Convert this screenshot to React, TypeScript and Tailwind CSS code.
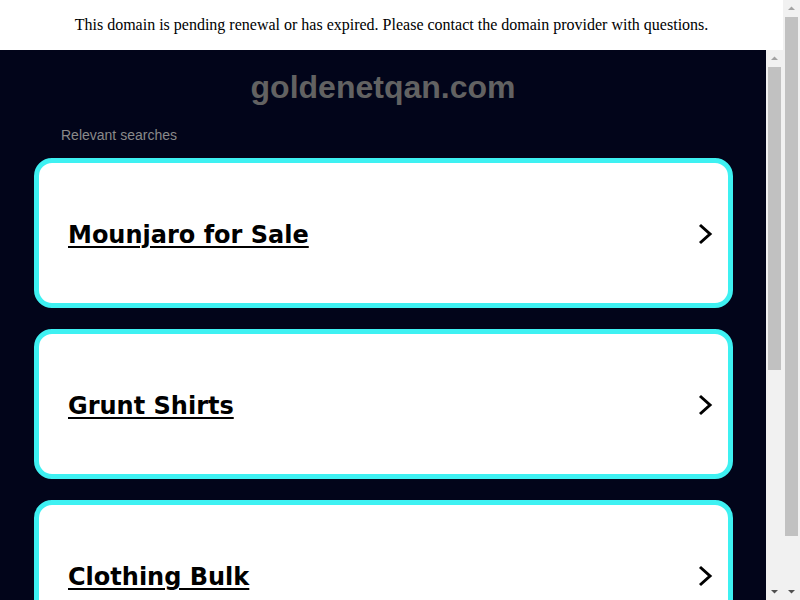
import React from 'react';

const searches = ['Mounjaro for Sale', 'Grunt Shirts', 'Clothing Bulk'];

const UpArrow = () => (
  <svg width="17" height="17" viewBox="0 0 17 17"><path d="M5 10h7L8.5 6.5z" fill="#a3a3a3" /></svg>
);
const DownArrow = () => (
  <svg width="17" height="17" viewBox="0 0 17 17"><path d="M5 7h7l-3.5 3.5z" fill="#505050" /></svg>
);

const Scrollbar = ({ thumb }: { thumb: string }) => (
  <div className="flex h-full w-[17px] flex-col bg-[#f1f1f1]">
    <UpArrow />
    <div className="flex-1 px-[2px]">
      <div className={`${thumb} w-full bg-[#c1c1c1]`} />
    </div>
    <DownArrow />
  </div>
);

const Card = ({ label }: { label: string }) => (
  <a className="flex h-[150px] items-center justify-between rounded-[18px] border-[5px] border-[#3ef1f2] bg-white pl-[29px] pr-[15px]">
    <span className="mt-[4px] font-['DejaVu_Sans',Verdana,sans-serif] text-[24px] font-bold text-black underline decoration-2 underline-offset-[3px]">
      {label}
    </span>
    <svg width="16" height="22" viewBox="0 0 16 22" fill="none" className="mt-[2px]">
      <path d="M3 2l10 9-10 9" stroke="#000" strokeWidth="3" />
    </svg>
  </a>
);

export default function App() {
  return (
    <div className="flex h-[600px] w-[800px] overflow-hidden">
      <div className="flex w-[783px] flex-col">
        <div className="flex h-[50px] items-center justify-center bg-white font-['Liberation_Serif',serif] text-[16px] text-black">
          This domain is pending renewal or has expired. Please contact the domain provider with questions.
        </div>
        <div className="flex min-h-0 flex-1">
          <div className="w-[766px] overflow-hidden bg-[#02051a] pt-[17px] font-['Liberation_Sans',Arial,sans-serif]">
            <h1 className="text-center text-[32px] font-bold leading-[40px] text-[#626262]">goldenetqan.com</h1>
            <div className="mt-[18px] pl-[61px] text-[14px] leading-[20px] text-[#8a8a8a]">Relevant searches</div>
            <div className="mt-[13px] flex flex-col gap-[21px] pl-[34px] pr-[33px]">
              {searches.map(s => (
                <Card key={s} label={s} />
              ))}
            </div>
          </div>
          <Scrollbar thumb="h-[303px]" />
        </div>
      </div>
      <Scrollbar thumb="h-[519px]" />
    </div>
  );
}
